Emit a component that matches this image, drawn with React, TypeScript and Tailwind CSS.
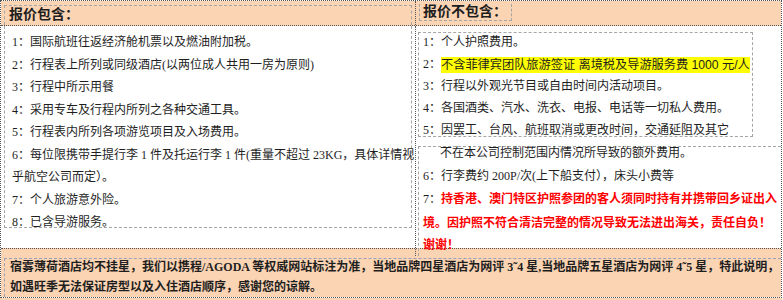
export default function App() {
  return (
    <div className="w-[783px] h-[300px] bg-white overflow-hidden font-['Liberation_Serif','Noto_Sans_CJK_SC',serif] text-[12px] text-[#1e1e1e]">
      <div className="w-[782px] border-t border-l border-r border-b border-dotted border-[#555]">
        {/* header row */}
        <div className="grid grid-cols-[414px_1fr] h-[25px] bg-[#fbd4b4] border-b border-dotted border-[#555]">
          <div className="pl-[3px] pt-[4px]">
            <div className="h-full w-[408px] border-t border-l border-r border-dashed border-[#a6a6a6]">
              <div className="pl-[4px] text-[14px] font-bold leading-[18px]">报价包含：</div>
            </div>
          </div>
          <div className="border-l border-dotted border-[#555] pl-[3px]">
            <div className="inline-block mt-[3px] border-l border-r border-b border-dashed border-[#a6a6a6] pl-[3px] pr-[4px] text-[14px] font-bold leading-[16px]">
              报价不包含：
            </div>
          </div>
        </div>

        {/* body row */}
        <div className="grid grid-cols-[414px_1fr] h-[222px]">
          <div className="pl-[3px]">
            <div className="w-[408px] h-[202px] border-l border-r border-b border-dashed border-[#a6a6a6] pl-[7px] pt-[5px] leading-[22.5px] whitespace-nowrap">
              <div>1：国际航班往返经济舱机票以及燃油附加税。</div>
              <div>2：行程表上所列或同级酒店(以两位成人共用一房为原则)</div>
              <div>3：行程中所示用餐</div>
              <div>4：采用专车及行程内所列之各种交通工具。</div>
              <div>5：行程表内所列各项游览项目及入场费用。</div>
              <div>6：每位限携带手提行李 1 件及托运行李 1 件(重量不超过 23KG，具体详情视</div>
              <div>乎航空公司而定）。</div>
              <div>7：个人旅游意外险。</div>
              <div>8：已含导游服务。</div>
            </div>
          </div>
          <div className="border-l border-dotted border-[#555] pl-[2px] flex flex-col">
            <div className="mt-[6px] w-[335px] h-[105px] border border-dashed border-[#a6a6a6] pl-[4px] leading-[22px] whitespace-nowrap">
              <div className="-mt-[2px]">
                <div>1：个人护照费用。</div>
                <div>
                  2：
                  <span className="inline-block bg-[#ffff00] font-['Liberation_Sans','Noto_Sans_CJK_SC',sans-serif] text-[12.2px] leading-[16px] align-middle">
                    不含菲律宾团队旅游签证 离境税及导游服务费 1000 元/人
                  </span>
                </div>
                <div>3：行程以外观光节目或自由时间内活动项目。</div>
                <div>4：各国酒类、汽水、洗衣、电报、电话等一切私人费用。</div>
                <div>5：因罢工、台风、航班取消或更改时间，交通延阻及其它</div>
              </div>
            </div>
            <div className="mt-[9px] flex-1 border-t border-l border-dashed border-[#a6a6a6] pl-[4px] leading-[22.5px] whitespace-nowrap">
              <div className="-mt-[5px]">
                <div className="pl-[17px]">不在本公司控制范围内情况所导致的额外费用。</div>
                <div>6：行李费约 200P/次(上下船支付），床头小费等</div>
                <div>
                  7：
                  <span className="font-['Noto_Sans_CJK_SC','Liberation_Sans',sans-serif] font-bold text-[#ff0000]">
                    持香港、澳门特区护照参团的客人须同时持有并携带回乡证出入
                  </span>
                </div>
                <div className="font-['Noto_Sans_CJK_SC','Liberation_Sans',sans-serif] font-bold text-[#ff0000]">
                  境。因护照不符合清洁完整的情况导致无法进出海关，责任自负！
                </div>
                <div className="font-['Noto_Sans_CJK_SC','Liberation_Sans',sans-serif] font-bold text-[#ff0000]">
                  谢谢！
                </div>
              </div>
            </div>
          </div>
        </div>

        {/* bottom row */}
        <div className="h-[49px] bg-[#fbd4b4] border-t border-dotted border-[#555] pl-[3px] pt-[9px]">
          <div className="h-full border-t border-l border-dashed border-[#9aa0bc] pl-[5px] font-bold leading-[20px] whitespace-nowrap">
            <div className="-mt-[2px]">
              <div>宿雾薄荷酒店均不挂星，我们以携程/AGODA 等权威网站标注为准，当地品牌四星酒店为网评 3˜4 星,当地品牌五星酒店为网评 4˜5 星，特此说明，</div>
              <div>如遇旺季无法保证房型以及入住酒店顺序，感谢您的谅解。</div>
            </div>
          </div>
        </div>
      </div>
      <div className="w-[782px] h-[4px] bg-[#fbd4b4]"></div>
    </div>
  );
}
